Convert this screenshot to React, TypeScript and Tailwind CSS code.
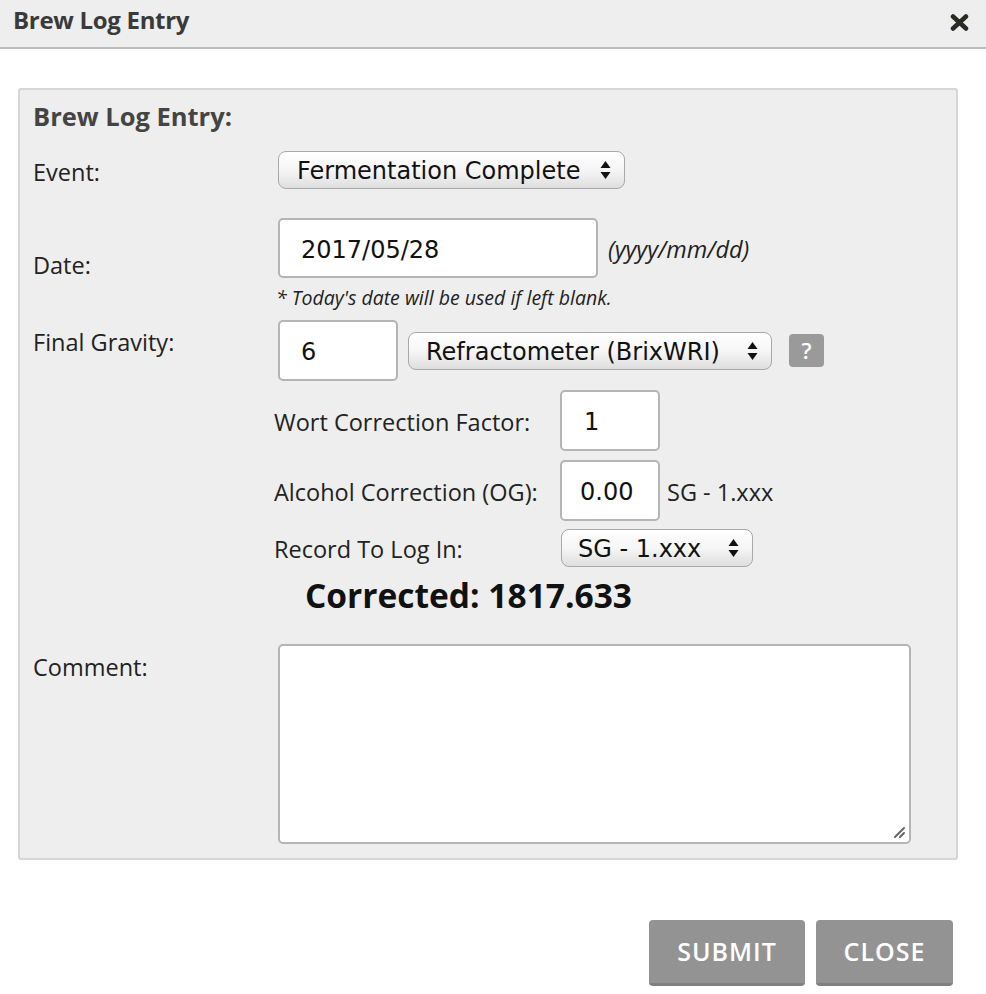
import React from "react";

const label = "font-['Open_Sans',sans-serif] text-[23.5px] text-[#222]";
const ctrl = "font-['DejaVu_Sans',Verdana,sans-serif] text-[24px] leading-[28px] text-[#111]";

function Arrows() {
  return (
    <svg width="11" height="20" viewBox="0 0 11 20" className="shrink-0">
      <path d="M5.5 1 L10.5 8 H0.5 Z" fill="#111" />
      <path d="M5.5 19 L10.5 12 H0.5 Z" fill="#111" />
    </svg>
  );
}

function Select({ value, className }: { value: string; className: string }) {
  return (
    <div
      className={`flex items-center justify-between h-[38px] rounded-[8px] border border-[#a9a9a9] bg-gradient-to-b from-white via-[#f6f6f6] to-[#dedede] shadow-[inset_0_1px_0_#fff] ${className}`}
    >
      <span className={`${ctrl} pt-[2px]`}>{value}</span>
      <Arrows />
    </div>
  );
}

function Input({ value, className }: { value: string; className: string }) {
  return (
    <div className={`flex items-center bg-white border-2 border-[#b5b5b5] rounded-[5px] ${className}`}>
      <span className={`${ctrl} pt-[3px]`}>{value}</span>
    </div>
  );
}

export default function App() {
  return (
    <div className="w-[986px] h-[994px] bg-white relative overflow-hidden">
      <div className="h-[49px] bg-[#eeeeee] border-b-2 border-[#bdbdbd] flex items-center justify-between pl-[13px] pr-[17px]">
        <span className="font-['Open_Sans',sans-serif] font-bold text-[24px] leading-[32px] text-[#3a3a3a] tracking-[-0.3px] -mt-[7px]">
          Brew Log Entry
        </span>
        <svg width="19" height="17" viewBox="0 0 19 17" className="-mt-[3px]">
          <path d="M3 2.5 L16 14.5 M16 2.5 L3 14.5" stroke="#2a2a22" strokeWidth="4.5" strokeLinecap="round" />
        </svg>
      </div>

      <div className="mt-[39px] ml-[18px] w-[940px] h-[772px] bg-[#eeeeee] border-2 border-[#d6d6d6] rounded-[3px] pl-[13px] pt-[10px]">
        <div className="font-['Open_Sans',sans-serif] font-bold text-[25.5px] leading-[33px] text-[#444]">Brew Log Entry:</div>

        <div className="flex items-center mt-[17px]">
          <div className={`${label} w-[245px] pt-[5px]`}>Event:</div>
          <Select value="Fermentation Complete" className="w-[347px] pl-[18px] pr-[13px]" />
        </div>

        <div className="flex items-center mt-[28px]">
          <div className={`${label} w-[245px] pt-[2px]`}>Date:</div>
          <div>
            <div className="flex items-center">
              <Input value="2017/05/28" className="w-[320px] h-[60px] pl-[21px]" />
              <span className="font-['Open_Sans',sans-serif] italic text-[23.5px] text-[#222] ml-[10px] pt-[2px]">(yyyy/mm/dd)</span>
            </div>
            <div className="font-['Open_Sans',sans-serif] italic text-[19.5px] leading-[24px] text-[#222] -ml-[2px] mt-[8px]">
              * Today's date will be used if left blank.
            </div>
          </div>
        </div>

        <div className="flex items-start mt-[10px]">
          <div className={`${label} w-[245px] pt-[5px]`}>Final Gravity:</div>
          <div>
            <div className="flex items-center">
              <Input value="6" className="w-[120px] h-[61px] pl-[21px]" />
              <Select value="Refractometer (BrixWRI)" className="w-[364px] ml-[10px] pl-[17px] pr-[13px]" />
              <div className="ml-[17px] w-[35px] h-[33px] rounded-[4px] bg-[#9a9a9a] flex items-center justify-center font-['Open_Sans',sans-serif] font-semibold text-[22px] text-white">
                ?
              </div>
            </div>
            <div className="flex items-center mt-[9px] -ml-[4px]">
              <div className={`${label} w-[286px] pt-[3px]`}>Wort Correction Factor:</div>
              <Input value="1" className="w-[100px] h-[61px] pl-[22px]" />
            </div>
            <div className="flex items-center mt-[9px] -ml-[4px]">
              <div className={`${label} w-[286px] pt-[3px]`}>Alcohol Correction (OG):</div>
              <Input value="0.00" className="w-[100px] h-[61px] pl-[18px]" />
              <span className="font-['Open_Sans',sans-serif] text-[23.5px] text-[#222] ml-[7px] pt-[3px]">SG - 1.xxx</span>
            </div>
            <div className="flex items-center mt-[8px] -ml-[4px]">
              <div className={`${label} w-[287px] pt-[2px]`}>Record To Log In:</div>
              <Select value="SG - 1.xxx" className="w-[192px] pl-[16px] pr-[13px]" />
            </div>
            <div className="font-['Open_Sans',sans-serif] font-bold text-[33.5px] text-[#111] ml-[27px] mt-[7px] leading-[42px]">
              Corrected: 1817.633
            </div>
          </div>
        </div>

        <div className="flex items-start mt-[28px]">
          <div className={`${label} w-[245px] pt-[6px]`}>Comment:</div>
          <div className="relative w-[633px] h-[200px] bg-white border-2 border-[#b5b5b5] rounded-[5px]">
            <svg width="14" height="14" viewBox="0 0 14 14" className="absolute right-[3px] bottom-[3px]">
              <path d="M12 3 L3 12 M12 8 L8 12" stroke="#666" strokeWidth="2" strokeLinecap="round" />
            </svg>
          </div>
        </div>
      </div>

      <div className="flex justify-end gap-[11px] mt-[60px] pr-[33px]">
        <div className="w-[156px] h-[66px] rounded-[4px] bg-[#939393] border-b-[3px] border-[#808080] flex items-center justify-center font-['Open_Sans',sans-serif] font-semibold text-[25px] tracking-[1px] text-white">
          SUBMIT
        </div>
        <div className="w-[137px] h-[66px] rounded-[4px] bg-[#939393] border-b-[3px] border-[#808080] flex items-center justify-center font-['Open_Sans',sans-serif] font-semibold text-[25px] tracking-[1px] text-white">
          CLOSE
        </div>
      </div>
    </div>
  );
}
